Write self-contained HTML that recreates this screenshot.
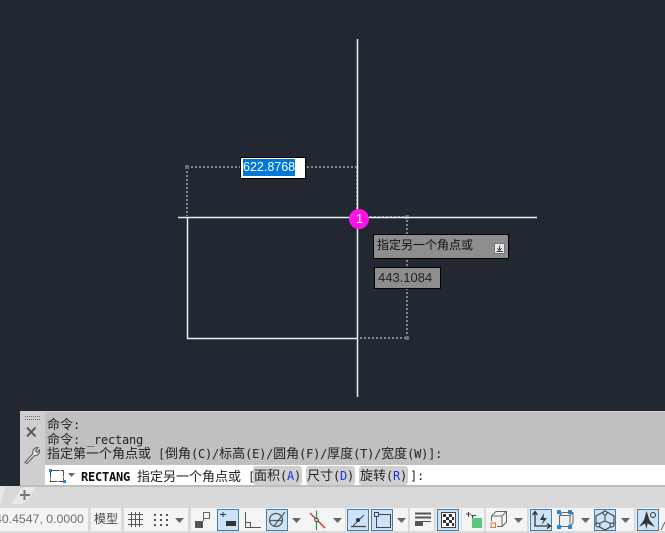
<!DOCTYPE html>
<html><head><meta charset="utf-8">
<style>
html,body{margin:0;padding:0;width:665px;height:533px;overflow:hidden;background:#222831}
svg{position:absolute;left:0;top:0}
.t{position:absolute;white-space:pre;font-family:"DejaVu Sans Mono","Noto Sans CJK SC",monospace;font-size:12px;letter-spacing:-.224px;line-height:14px;color:#222}
.t i{font-style:normal;font-family:"Noto Sans CJK SC",sans-serif;font-size:13px;letter-spacing:0}
.s{position:absolute;white-space:pre;font-family:"Liberation Sans","Noto Sans CJK SC",sans-serif}
.p{position:absolute;background:#d0d0d0;border-radius:3px;height:19px;top:466px}
b{color:#111}
u{text-decoration:none;color:#1c34e0}
</style></head><body>
<svg width="665" height="533" viewBox="0 0 665 533" shape-rendering="crispEdges">
<!-- drawing -->
<g stroke="#82868c" stroke-width="2" stroke-dasharray="2 2" fill="none">
<path d="M187 167H357M187 167V216M357 167V216M358 217H407V338M360 338H407"/>
</g>
<g fill="#6a6e75"><rect x="185" y="165" width="4" height="4"/><rect x="405" y="215" width="4" height="4"/><rect x="405" y="336" width="4" height="4"/></g>
<g stroke="#eceef0" fill="none" shape-rendering="auto">
<path d="M357.5 39V397M178 217.5H537M187.5 217.5V338.5H357.5" stroke-width="1.5"/>
</g>
<g shape-rendering="auto"><circle cx="359" cy="219" r="10" fill="#ff12e8"/></g>
<!-- dim input -->
<rect x="240.5" y="157.5" width="65" height="21" fill="#fff" stroke="#000"/>
<rect x="243" y="159" width="52" height="17" fill="#0078d7"/>
<!-- tooltip -->
<rect x="373.5" y="234.5" width="135" height="24" fill="#8e8e8e" stroke="#000"/>
<rect x="374.5" y="267.5" width="66" height="21" fill="#8e8e8e" stroke="#000"/>
<rect x="494.5" y="243.5" width="10" height="10" fill="#e9e9e9" stroke="#777"/>
<path d="M499.5 245.5V250M497.5 248.5L499.5 250.5L501.5 248.5M496.5 251.5H503" stroke="#444" fill="none"/>
<!-- command panel -->
<rect x="20" y="411" width="645" height="75" fill="#c0c0c0"/>
<rect x="20" y="411" width="25" height="75" fill="#cfcfcf"/>
<rect x="20" y="411" width="645" height="1" fill="#d5d5d5"/>
<rect x="45" y="465" width="620" height="20" fill="#fff"/>
<!-- grip -->
<g fill="#666"><path d="M25 416h1v1h-1zM27 416h1v1h-1zM29 416h1v1h-1zM31 416h1v1h-1zM33 416h1v1h-1zM35 416h1v1h-1zM37 416h1v1h-1zM39 416h1v1h-1zM25 419h1v1h-1zM27 419h1v1h-1zM29 419h1v1h-1zM31 419h1v1h-1zM33 419h1v1h-1zM35 419h1v1h-1zM37 419h1v1h-1zM39 419h1v1h-1z"/></g>
<g shape-rendering="auto" fill="none">
<path d="M27 427.5L35.5 436.5M35.5 427.5L27 436.5" stroke="#555" stroke-width="2"/>
<path d="M25 462.5L33 453.5C32 450 34.500 447.500 38 447.500L35.500 450.500L37 452.500L39.500 450C40 453.500 37.500 456 34.500 455.500L27 463.500Z" stroke="#555" stroke-width="1" fill="#e6e6e6"/>
</g>
<!-- rect prompt icon -->
<rect x="50.500" y="470.500" width="13" height="11" fill="none" stroke="#555" stroke-dasharray="9 1"/>
<rect x="49" y="469" width="3" height="3" fill="#1e88e5"/><rect x="63" y="480" width="3" height="3" fill="#1e88e5"/>
<path d="M68 473H75L71.500 477Z" fill="#666" shape-rendering="auto"/>
<!-- tab bar -->
<rect x="0" y="486" width="665" height="47" fill="#d9d9d9"/>
<rect x="20" y="485" width="645" height="2" fill="#bdbdbd"/>
<path shape-rendering="auto" d="M0 487H5C3 495 2 501 0 504ZM10 504C17 502 17 489 25 487H36C31 492 31 502 20 504Z" fill="#e9e9e9"/>
<path d="M24.500 490V500M20 495H30" stroke="#777" stroke-width="2"/>
<!-- status groups -->
<g fill="#f4f4f4">
<rect x="0" y="508" width="88" height="23"/><rect x="91" y="508" width="30" height="23"/>
<rect x="124" y="508" width="64" height="23"/><rect x="191" y="508" width="154" height="23"/>
<rect x="346" y="508" width="62" height="23"/><rect x="410" y="508" width="24" height="23"/>
<rect x="436" y="508" width="25" height="23"/><rect x="462" y="508" width="22" height="23"/>
<rect x="486" y="508" width="41" height="23"/><rect x="529" y="508" width="105" height="23"/>
<rect x="636" y="508" width="29" height="23"/>
</g>
<g fill="#cbe4fa" stroke="#4a7ba3">
<rect x="217.500" y="509.500" width="21" height="21"/><rect x="266.500" y="509.500" width="21" height="21"/>
<rect x="347.500" y="509.500" width="21" height="21"/><rect x="371.500" y="509.500" width="21" height="21"/>
<rect x="437.500" y="509.500" width="21" height="21"/><rect x="530.500" y="509.500" width="21" height="21"/>
<rect x="594.500" y="509.500" width="21" height="21"/><rect x="637.500" y="509.500" width="21" height="21"/>
</g>
<g fill="none" stroke="#555">
<!-- grid -->
<path d="M128 514.500H143M128 519.500H143M128 524.500H143M131.500 512V527M135.500 512V527M139.500 512V527"/>
<!-- snap dots -->
<path d="M154 514h2v2h-2zM160 514h2v2h-2zM166 514h2v2h-2zM154 519h2v2h-2zM160 519h2v2h-2zM166 519h2v2h-2zM154 524h2v2h-2zM160 524h2v2h-2zM166 524h2v2h-2z" fill="#555" stroke="none"/>
<!-- infer -->
<rect x="203.500" y="512.500" width="6" height="6" stroke="#666"/><rect x="195" y="521" width="8" height="7" fill="#555" stroke="none"/>
<path d="M203.500 518.500V521" stroke="#666"/>
<!-- dyn input -->
<path d="M220 514.500H226M223 512V517" stroke="#333"/><rect x="226" y="521" width="10" height="5" fill="#333" stroke="none"/>
<!-- ortho -->
<path d="M245.500 512V527.500H261M245.500 522.500H250.500V527"/>
</g>
<g shape-rendering="auto" fill="none" stroke="#555">
<circle cx="276" cy="520" r="6.500" stroke-width="1.300"/><path d="M270 520.500H283M274 526L285 512" stroke-width="1.200"/>
<path d="M310 513L325 528" stroke="#d92b2b" stroke-width="1.300"/>
<path d="M316.500 510.500V530" stroke="#1fa64a" stroke-width="1.300"/>
<circle cx="316.500" cy="520" r="1.800" fill="#ddd" stroke="#444"/>
<path d="M351 526.500H366" stroke="#444" stroke-width="1.300"/><path d="M353 526L364 515" stroke="#444"/><circle cx="358" cy="520" r="2" fill="#333" stroke="none"/>
</g>
<g fill="none" stroke="#444">
<rect x="376.500" y="514.500" width="14" height="13"/><rect x="374.500" y="512.500" width="4" height="4" fill="#cbe4fa"/>
<path d="M415 513.500H431M415 517.500H431" stroke="#555" stroke-width="2"/><path d="M415 521.500H431" stroke="#555"/><rect x="415" y="522" width="8" height="4" fill="#555" stroke="none"/>
<!-- checker -->
<rect x="441.500" y="512.500" width="14" height="15" fill="#fff"/>
<path d="M443 514h3v3h-3zM449 514h3v3h-3zM446 517h3v3h-3zM452 517h2v3h-2zM443 520h3v3h-3zM449 520h3v3h-3zM446 523h3v3h-3zM452 523h2v3h-2z" fill="#333" stroke="none"/>
<!-- green -->
<path d="M466 514H471M468.500 512V517M471 515.500H476" stroke="#444"/>
<rect x="472" y="518" width="10" height="10" fill="#59c77c" stroke="none"/><path d="M472.500 516V518" stroke="#333"/>
</g>
<g shape-rendering="auto" fill="none" stroke="#666">
<path d="M491.500 516L496 511.500H506.500V522L502 526.500M491.500 516V521M491.500 516H502V526.500H497M502 516L506.500 511.500"/>
<rect x="491" y="523" width="4.500" height="4.500" stroke="#d97a30" stroke-width="1"/>
<!-- ucs -->
<path d="M535 512V526H550M532.500 515L535 511.500L537.500 515M547 523.500L550.500 526L547 528.500" stroke="#333" stroke-width="1.300"/>
<path d="M544 513L540 520H543.500L541.500 525L547 518H543.500Z" fill="#333" stroke="none"/>
<!-- gizmo -->
<path d="M559.500 515.500L562.500 512.500H573V523L570 526.500H559.500ZM559.500 515.500H570V526.500M570 515.500L573 512.500"/>
<!-- 3d -->
<path d="M605 511L614 516V525L605 530L596 525V516ZM605 521L596 525M605 521L614 525M605 511V521" stroke="#444" stroke-width="1.100"/>
<circle cx="605" cy="513" r="2" fill="#cbe4fa" stroke="#333"/><circle cx="598" cy="525" r="2" fill="#cbe4fa" stroke="#333"/><circle cx="612" cy="525" r="2" fill="#cbe4fa" stroke="#333"/>
<!-- anno -->
<path d="M646.500 511L649.500 520L655 527L647.500 523.500L646.500 529L645 523.500L639 527L644 520Z" fill="#333" stroke="none"/>
<circle cx="653" cy="515" r="2.500" stroke="#333"/>
<path d="M661 530L665 522" stroke="#666"/>
</g>
<g fill="#666" shape-rendering="auto">
<path d="M175 518H184L179.500 523Z"/><path d="M292 518H301L296.500 523Z"/><path d="M333 518H342L337.500 523Z"/>
<path d="M397 518H406L401.500 523Z"/><path d="M514 518H523L518.500 523Z"/><path d="M581 518H590L585.500 523Z"/><path d="M621 518H630L625.500 523Z"/>
</g>
<g><rect x="557" y="510" width="4" height="4" fill="#1e88e5"/><rect x="568" y="510" width="4" height="4" fill="#1e88e5"/><rect x="557" y="525" width="4" height="4" fill="#1e88e5"/><rect x="568" y="525" width="4" height="4" fill="#1e88e5"/></g>
</svg>

<div class="s" style="left:243px;top:160px;font-size:12.5px;line-height:15px;color:#fff">622.8768</div>
<div class="s" style="left:353px;top:211px;width:13px;text-align:center;font-size:13px;line-height:15px;color:#fff">1</div>
<div class="s" style="left:377px;top:237px;font-size:12px;line-height:16px;color:#111">指定另一个角点或</div>
<div class="s" style="left:378px;top:270px;font-size:13px;line-height:15px;color:#222">443.1084</div>

<div class="t" style="left:47px;top:417px"><i>命令</i>:</div>
<div class="t" style="left:47px;top:432px"><i>命令</i>: _rectang</div>
<div class="t" style="left:47px;top:446px"><i>指定第一个角点或</i> [<i>倒角</i>(C)/<i>标高</i>(E)/<i>圆角</i>(F)/<i>厚度</i>(T)/<i>宽度</i>(W)]:</div>

<div class="p" style="left:253px;width:49px"></div>
<div class="p" style="left:306px;width:49px"></div>
<div class="p" style="left:359px;width:49px"></div>
<div class="t" style="left:81px;top:469px"><b style="font-weight:bold">RECTANG</b> <i>指定另一个角点或</i> [</div>
<div class="t" style="left:254px;top:468px"><i>面积</i>(<u>A</u>)</div>
<div class="t" style="left:307px;top:468px"><i>尺寸</i>(<u>D</u>)</div>
<div class="t" style="left:360px;top:468px"><i>旋转</i>(<u>R</u>)</div>
<div class="t" style="left:410px;top:469px">]:</div>

<div class="s" style="left:-5px;top:511px;font-size:12.3px;line-height:16px;color:#6b6f76">40.4547, 0.0000</div>
<div class="s" style="left:94px;top:511px;font-size:12px;line-height:16px;color:#444">模型</div>
</body></html>
